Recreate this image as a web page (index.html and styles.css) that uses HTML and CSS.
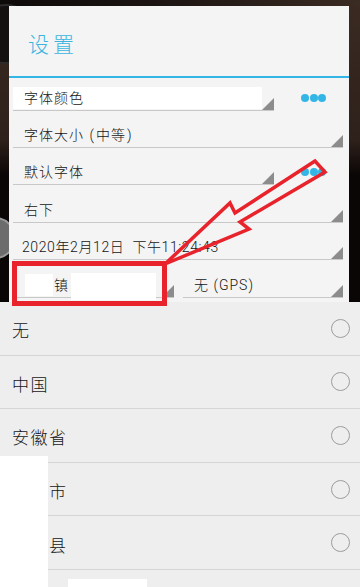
FILE: index.html
```html
<!DOCTYPE html>
<html lang="zh-CN">
<head>
<meta charset="utf-8">
<title>设置</title>
<link rel="stylesheet" href="styles.css">
</head>
<body>
<div class="screen">
  <div class="wall-ring"></div>
  <div class="wall-knob"></div>

  <section class="dialog">
    <h1 class="title">设置</h1>
    <div class="rows">
      <div class="row row-first">
        <div class="spin spin-short"><span class="label label-white">字体颜色</span><i class="tri"></i></div>
        <div class="dots"><i></i><i></i><i></i></div>
      </div>
      <div class="row">
        <div class="spin"><span class="label">字体大小 <span class="paren">(</span>中等<span class="paren">)</span></span><i class="tri"></i></div>
      </div>
      <div class="row">
        <div class="spin spin-short"><span class="label">默认字体</span><i class="tri"></i></div>
        <div class="dots"><i></i><i></i><i></i></div>
      </div>
      <div class="row">
        <div class="spin"><span class="label">右下</span><i class="tri"></i></div>
      </div>
      <div class="row">
        <div class="spin"><span class="label label-date">2020年2月12日&nbsp;&nbsp;下午11:24:43</span><i class="tri"></i></div>
      </div>
      <div class="row row-split">
        <div class="spin spin-left">
          <span class="label"><span class="gap"></span>镇</span><i class="tri"></i>
          <b class="mask mask-a"></b><b class="mask mask-b"></b>
        </div>
        <div class="spin spin-right"><span class="label">无 (GPS)</span><i class="tri"></i></div>
      </div>
    </div>
  </section>

  <section class="sheet">
    <ul class="list">
      <li><span class="opt">无</span><i class="radio"></i></li>
      <li><span class="opt">中国</span><i class="radio"></i></li>
      <li><span class="opt">安徽省</span><i class="radio"></i></li>
      <li><span class="opt"><span class="gap2"></span>市</span><i class="radio"></i></li>
      <li><span class="opt"><span class="gap2"></span>县</span><i class="radio"></i></li>
      <li><span class="opt"></span><i class="radio"></i></li>
    </ul>
    <b class="mask mask-c"></b>
    <b class="mask mask-d"></b>
  </section>

  <div class="mark-box"></div>
  <svg class="arrow" width="360" height="587" viewBox="0 0 360 587" xmlns="http://www.w3.org/2000/svg">
    <polygon points="315,161 235,213 230,203 165,264 249,229 240,222 325,172" fill="none" stroke="#e8232b" stroke-width="3.5" stroke-linejoin="miter"/>
  </svg>
</div>
</body>
</html>
```

FILE: styles.css
```css
* { box-sizing: border-box; }

html, body {
  margin: 0;
  padding: 0;
  width: 360px;
  height: 587px;
  overflow: hidden;
  background: #0b0606;
}

body {
  font-family: "Roboto", "Noto Sans CJK SC", sans-serif;
  color: #151515;
}

.screen {
  position: relative;
  width: 360px;
  height: 587px;
  overflow: hidden;
  background:
    linear-gradient(90deg, #0e0a09 0, #1a1311 40%, #3a2b23 100%) top / 100% 6px no-repeat,
    linear-gradient(180deg, #3a2a22 0, #2e211b 140px, #0b0606 175px, #0b0606 100%);
}

.wall-ring {
  position: absolute;
  left: -24px;
  top: 4px;
  width: 60px;
  height: 60px;
  border-radius: 50%;
  background: #141010;
  border: 2px solid #2c2a2a;
}

.wall-knob {
  position: absolute;
  left: -26px;
  top: 217px;
  width: 42px;
  height: 42px;
  border-radius: 50%;
  background: #6c6c6c;
  border: 2px solid #9a9a9a;
}

/* dialog */
.dialog {
  position: relative;
  z-index: 1;
  width: 340px;
  height: 296px;
  margin: 6px 0 0 9px;
  background: #f4f4f4;
}

.title {
  margin: 0;
  height: 72px;
  padding: 4px 0 0 19px;
  display: flex;
  align-items: center;
  font-size: 21px;
  font-weight: 300;
  letter-spacing: 4px;
  color: #3bb4e0;
  border-bottom: 2px solid #33b5e5;
}

.rows {
  padding: 0 6px 0 4px;
}

.row {
  display: flex;
  align-items: flex-end;
  height: 37.4px;
}

.row-first {
  height: 32.7px;
}

.spin {
  position: relative;
  flex: 1;
  display: flex;
  align-items: flex-end;
  border-bottom: 1.5px solid #c8c8c8;
}

.spin-short {
  flex: none;
  width: 261px;
}

.label {
  flex: 1;
  height: 22px;
  line-height: 22px;
  margin-bottom: 1px;
  padding-left: 11px;
  font-size: 14px;
  font-weight: 300;
  letter-spacing: 1px;
  white-space: nowrap;
  color: #151515;
}

.label-white {
  background: #ffffff;
}

.label-date {
  letter-spacing: 0.6px;
  padding-left: 9px;
}

.paren {
  margin: 0 1px;
  font-size: 14px;
}

.tri {
  flex: none;
  width: 0;
  height: 0;
  border-left: 12px solid transparent;
  border-bottom: 12px solid #8c8c8c;
}

.dots {
  display: flex;
  gap: 0.5px;
  margin: 0 0 9px 27px;
}

.dots i {
  width: 8px;
  height: 8px;
  border-radius: 50%;
  background: #33b5e5;
}

.row-split .spin-left {
  flex: none;
  width: 161px;
  margin-right: 9px;
}

.gap {
  display: inline-block;
  width: 30px;
}

.mask {
  position: absolute;
  background: #ffffff;
}

.mask-a {
  left: 12px;
  top: 0;
  width: 28px;
  height: 22px;
}

.mask-b {
  left: 58px;
  top: -1px;
  width: 85px;
  height: 27px;
}

/* bottom sheet */
.sheet {
  position: relative;
  z-index: 2;
  height: 285px;
  background: #eeeeee;
}

.list {
  list-style: none;
  margin: 0;
  padding: 0;
}

.list li {
  height: 53.6px;
  display: flex;
  align-items: center;
  justify-content: space-between;
  padding: 3px 10px 0 12px;
  border-bottom: 1px solid #d5d5d5;
}

.opt {
  font-size: 17px;
  font-weight: 300;
  letter-spacing: 1.5px;
  color: #151515;
}

.gap2 {
  display: inline-block;
  width: 37px;
}

.radio {
  width: 19px;
  height: 19px;
  margin-bottom: 3px;
  border-radius: 50%;
  border: 1.5px solid #9c9c9c;
}

.mask-c {
  left: 0;
  top: 154px;
  width: 48px;
  height: 131px;
}

.mask-d {
  left: 68px;
  top: 277px;
  width: 79px;
  height: 8px;
}

/* annotation */
.mark-box {
  position: absolute;
  z-index: 3;
  left: 12px;
  top: 261px;
  width: 155px;
  height: 45px;
  border: 5px solid #e8232b;
}

.arrow {
  position: absolute;
  z-index: 3;
  left: 0;
  top: 0;
}
```
